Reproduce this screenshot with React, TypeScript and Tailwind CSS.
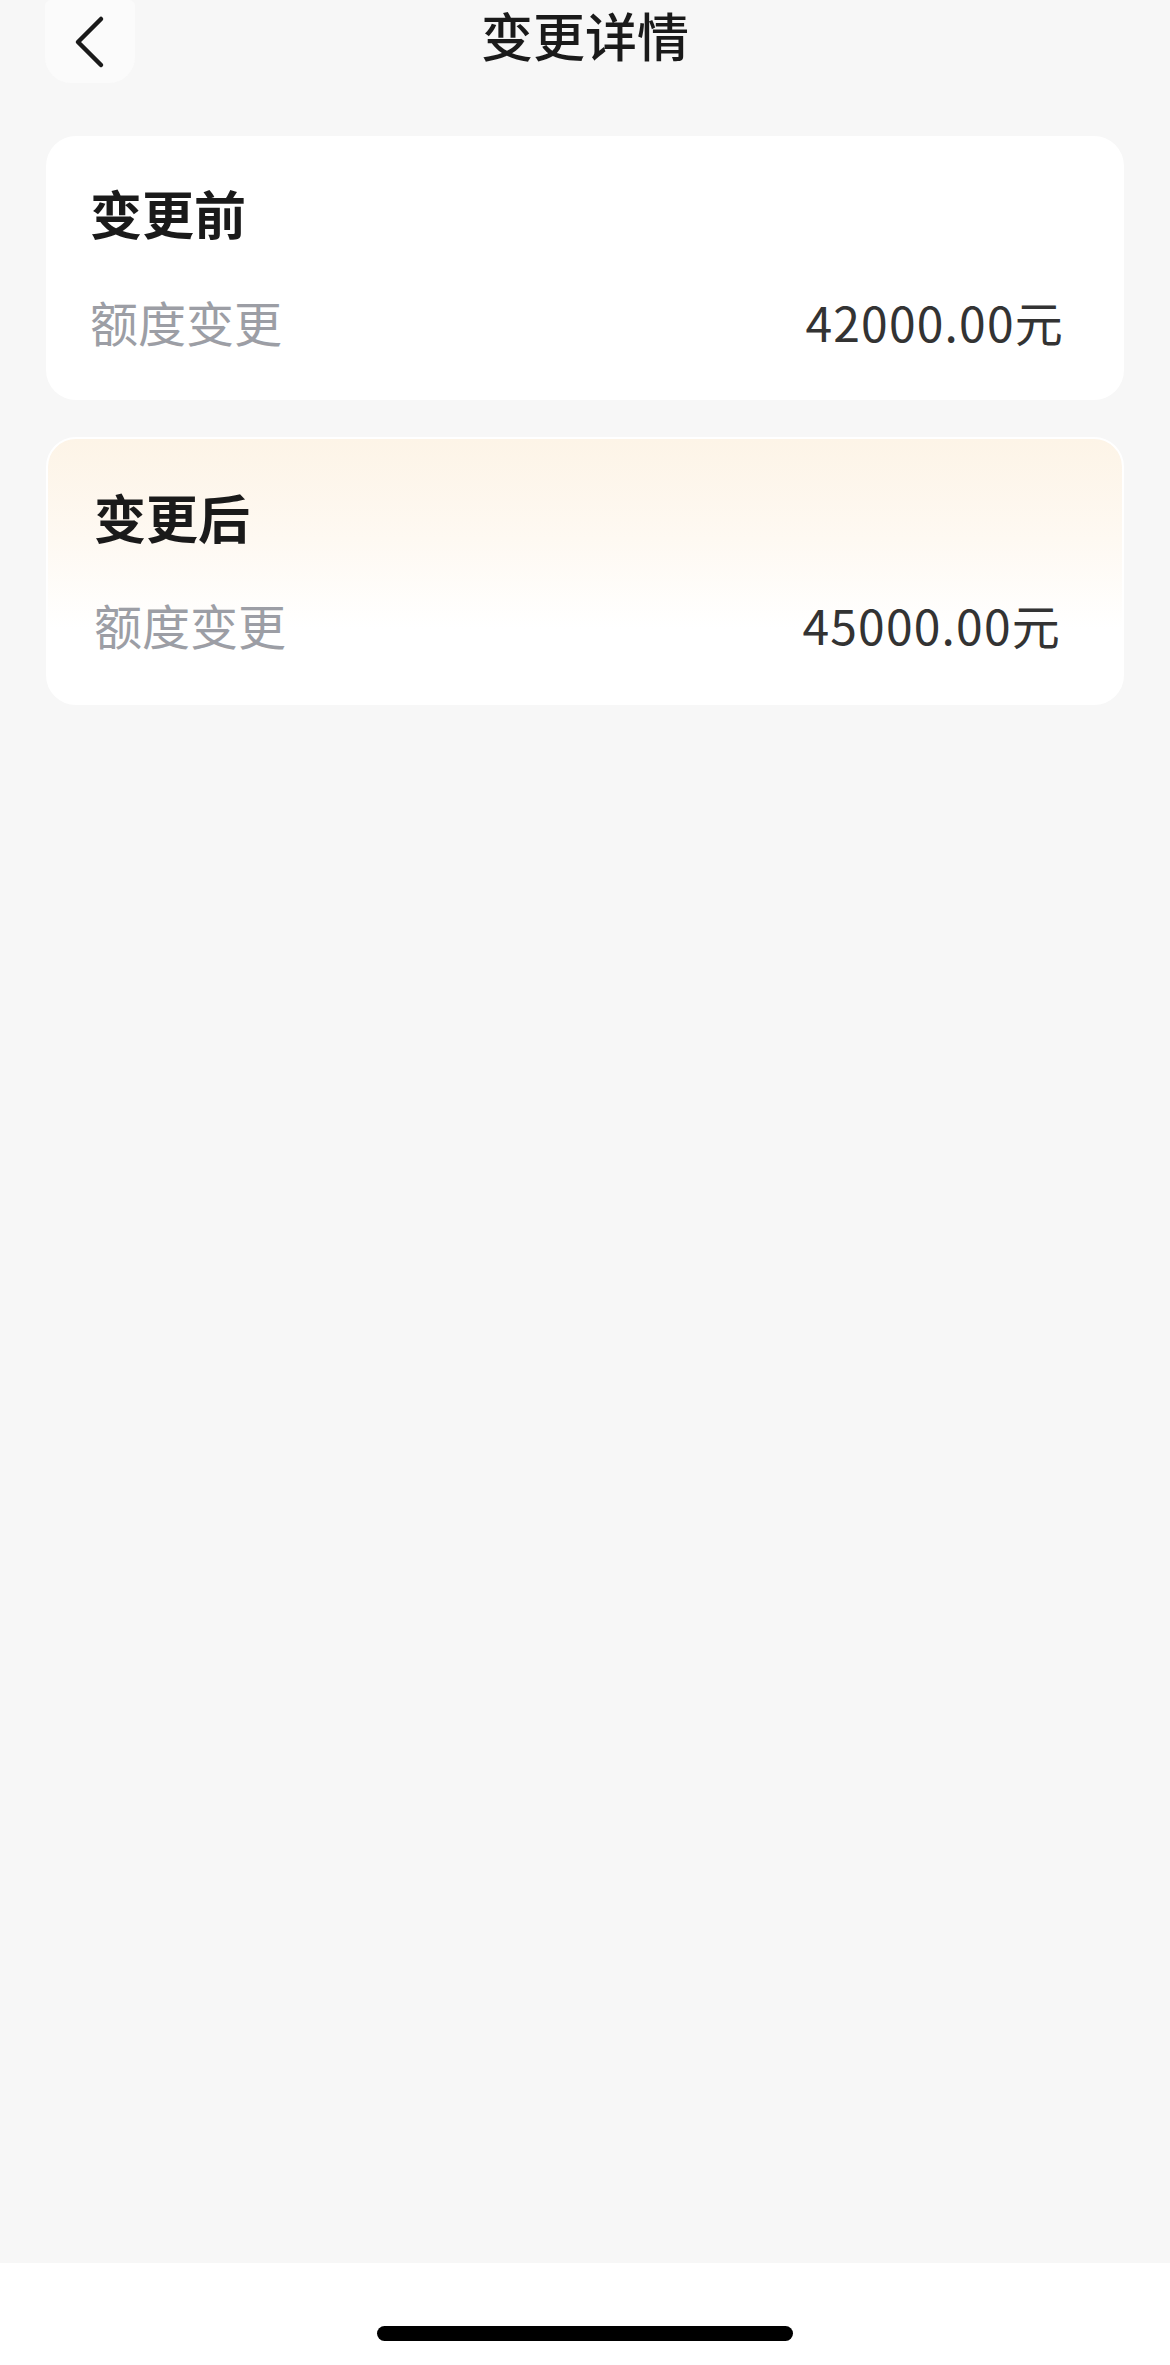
import React from 'react'

const font = { fontFamily: '"Noto Sans CJK SC", "Noto Sans", sans-serif' }

function BackButton() {
  return (
    <button className="flex h-[83px] w-[90px] items-center justify-center rounded-b-[26px] rounded-t-[6px] bg-[#fbfbfb]">
      <svg width="40" height="56" viewBox="0 0 40 56" fill="none">
        <path d="M31 5 L8 28 L31 51" stroke="#1a1a1a" strokeWidth="4.5" strokeLinecap="round" strokeLinejoin="round" />
      </svg>
    </button>
  )
}

function Row({ label, value }: { label: string; value: string }) {
  return (
    <div className="flex items-center justify-between text-[48px] leading-[48px]">
      <span className="text-[#9c9ea5]">{label}</span>
      <span className="tracking-[1.2px] text-[#333333]">{value}</span>
    </div>
  )
}

export default function App() {
  return (
    <div className="flex min-h-[2365px] w-full flex-col bg-[#f7f7f7]" style={font}>
      {/* Header */}
      <div className="relative flex h-[85px] items-start pl-[45px]">
        <BackButton />
        <div className="absolute left-0 right-0 top-[9px] text-center text-[52px] font-medium leading-[52px] text-[#1a1a1a]">
          变更详情
        </div>
      </div>

      {/* Cards */}
      <div className="flex flex-1 flex-col gap-[37px] px-[46px] pt-[51px]">
        <div className="rounded-[30px] bg-white pb-[55px] pl-[44px] pr-[60px] pt-[51px]">
          <div className="text-[52px] font-bold leading-[52px] text-[#1a1a1a]">变更前</div>
          <div className="mt-[58px]">
            <Row label="额度变更" value="42000.00元" />
          </div>
        </div>

        <div className="rounded-[30px] border-2 border-white bg-[linear-gradient(180deg,#fdf4e7_0%,#fef9f2_38%,#ffffff_72%)] pb-[55px] pl-[46px] pr-[61px] pt-[52px]">
          <div className="text-[52px] font-bold leading-[52px] text-[#1a1a1a]">变更后</div>
          <div className="mt-[57px]">
            <Row label="额度变更" value="45000.00元" />
          </div>
        </div>
      </div>

      {/* Home indicator */}
      <div className="flex h-[102px] items-start justify-center bg-white pt-[63px]">
        <div className="h-[15px] w-[416px] rounded-full bg-black" />
      </div>
    </div>
  )
}
